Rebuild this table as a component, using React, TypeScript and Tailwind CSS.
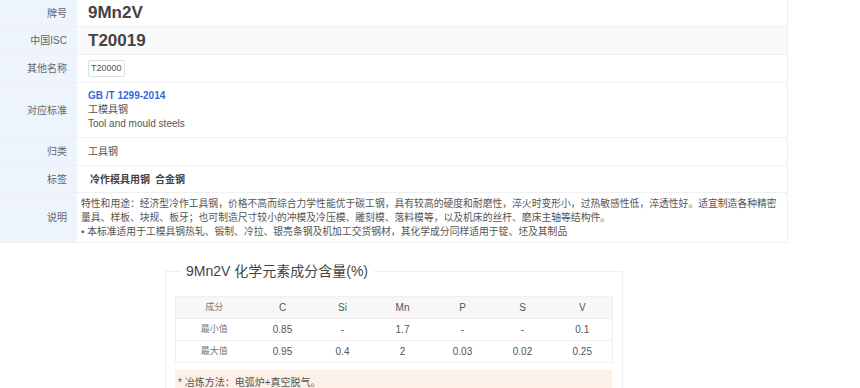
import type { ReactNode } from "react"

const rows: { label: string; h: string; bg?: string; body: ReactNode; pad?: string }[] = [
	{
		label: "牌号",
		h: "h-[27px]",
		body: <span className="text-[17px] font-bold text-[#444]">9Mn2V</span>,
	},
	{
		label: "中国ISC",
		h: "h-[28px]",
		bg: "bg-[#fafafa]",
		body: <span className="text-[17px] font-bold text-[#444]">T20019</span>,
	},
	{
		label: "其他名称",
		h: "h-[28px]",
		body: (
			<span className="flex h-[17px] items-center rounded-[2px] border border-[#dedede] px-[2px] text-[9px] text-[#555]">
				T20000
			</span>
		),
	},
	{
		label: "对应标准",
		h: "h-[55px]",
		body: (
			<div className="flex flex-col text-[10px] leading-[14px] text-[#555]">
				<span className="font-bold text-[#3568dc]">GB /T 1299-2014</span>
				<span>工模具钢</span>
				<span>Tool and mould steels</span>
			</div>
		),
	},
	{
		label: "归类",
		h: "h-[28px]",
		body: <span className="text-[10px] text-[#555]">工具钢</span>,
	},
	{
		label: "标签",
		h: "h-[27px]",
		body: (
			<span className="pl-[2px] text-[10px] font-bold text-[#444]">
				<span className="mr-[5px]">冷作模具用钢</span>
				<span>合金钢</span>
			</span>
		),
	},
	{
		label: "说明",
		h: "h-[50px]",
		pad: "pl-[4px]",
		body: (
			<div className="flex flex-col whitespace-nowrap text-[9.8px] leading-[14px] text-[#555]">
				<span>特性和用途：经济型冷作工具钢，价格不高而综合力学性能优于碳工钢，具有较高的硬度和耐磨性，淬火时变形小，过热敏感性低，淬透性好。适宜制造各种精密</span>
				<span>量具、样板、块规、板牙；也可制造尺寸较小的冲模及冷压模、雕刻模、落料模等，以及机床的丝杆、磨床主轴等结构件。</span>
				<span>• 本标准适用于工模具钢热轧、锻制、冷拉、银亮条钢及机加工交货钢材，其化学成分同样适用于锭、坯及其制品</span>
			</div>
		),
	},
]

const cols = ["C", "Si", "Mn", "P", "S", "V"]
const minVals = ["0.85", "-", "1.7", "-", "-", "0.1"]
const maxVals = ["0.95", "0.4", "2", "0.03", "0.02", "0.25"]

export default function App() {
	return (
		<div className="h-[388px] w-[860px] overflow-hidden bg-white font-['Liberation_Sans','Noto_Sans_CJK_SC',sans-serif]">
			<div className="w-[788px]">
				<div className="border-r border-[#f0f0f0]">
					{rows.map((r) => (
						<div key={r.label} className={`flex border-b border-[#f0f0f0] ${r.h}`}>
							<div className="flex w-[77px] shrink-0 items-center justify-end bg-[#edf4fc] pr-[10px] text-[10px] text-[#666]">
								{r.label}
							</div>
							<div className={`flex flex-1 items-center ${r.pad ?? "pl-[11px]"} ${r.bg ?? "bg-white"}`}>{r.body}</div>
						</div>
					))}
				</div>

				<fieldset className="mx-auto mt-[18px] w-[458px] border border-[#eeeeee] px-[9px] pb-[10px] pt-[15px]">
					<legend className="ml-[5px] px-[6px] text-[14px] leading-[20px] text-[#444]">9Mn2V 化学元素成分含量(%)</legend>
					<table className="w-[437px] table-fixed border-collapse border border-[#f0f0f0] text-center text-[10px] text-[#555]">
						<colgroup>
							<col className="w-[77px]" />
							{cols.map((c) => (
								<col key={c} className="w-[60px]" />
							))}
						</colgroup>
						<thead>
							<tr className="h-[22px] border-b border-[#eeeeee] bg-[#f7f7f7]">
								<th className="text-[9px] font-normal text-[#777]">成分</th>
								{cols.map((c) => (
									<th key={c} className="font-normal">
										{c}
									</th>
								))}
							</tr>
						</thead>
						<tbody>
							<tr className="h-[22px] border-b border-[#eeeeee]">
								<td className="text-[9px] text-[#777]">最小值</td>
								{minVals.map((v, i) => (
									<td key={i}>{v}</td>
								))}
							</tr>
							<tr className="h-[22px]">
								<td className="text-[9px] text-[#777]">最大值</td>
								{maxVals.map((v, i) => (
									<td key={i}>{v}</td>
								))}
							</tr>
						</tbody>
					</table>
					<div className="mt-[7px] flex h-[24px] w-[437px] items-center bg-[#fdf1e7] pl-[3px] text-[10px] text-[#555]">
						* 冶炼方法：电弧炉+真空脱气。
					</div>
				</fieldset>
			</div>
		</div>
	)
}
